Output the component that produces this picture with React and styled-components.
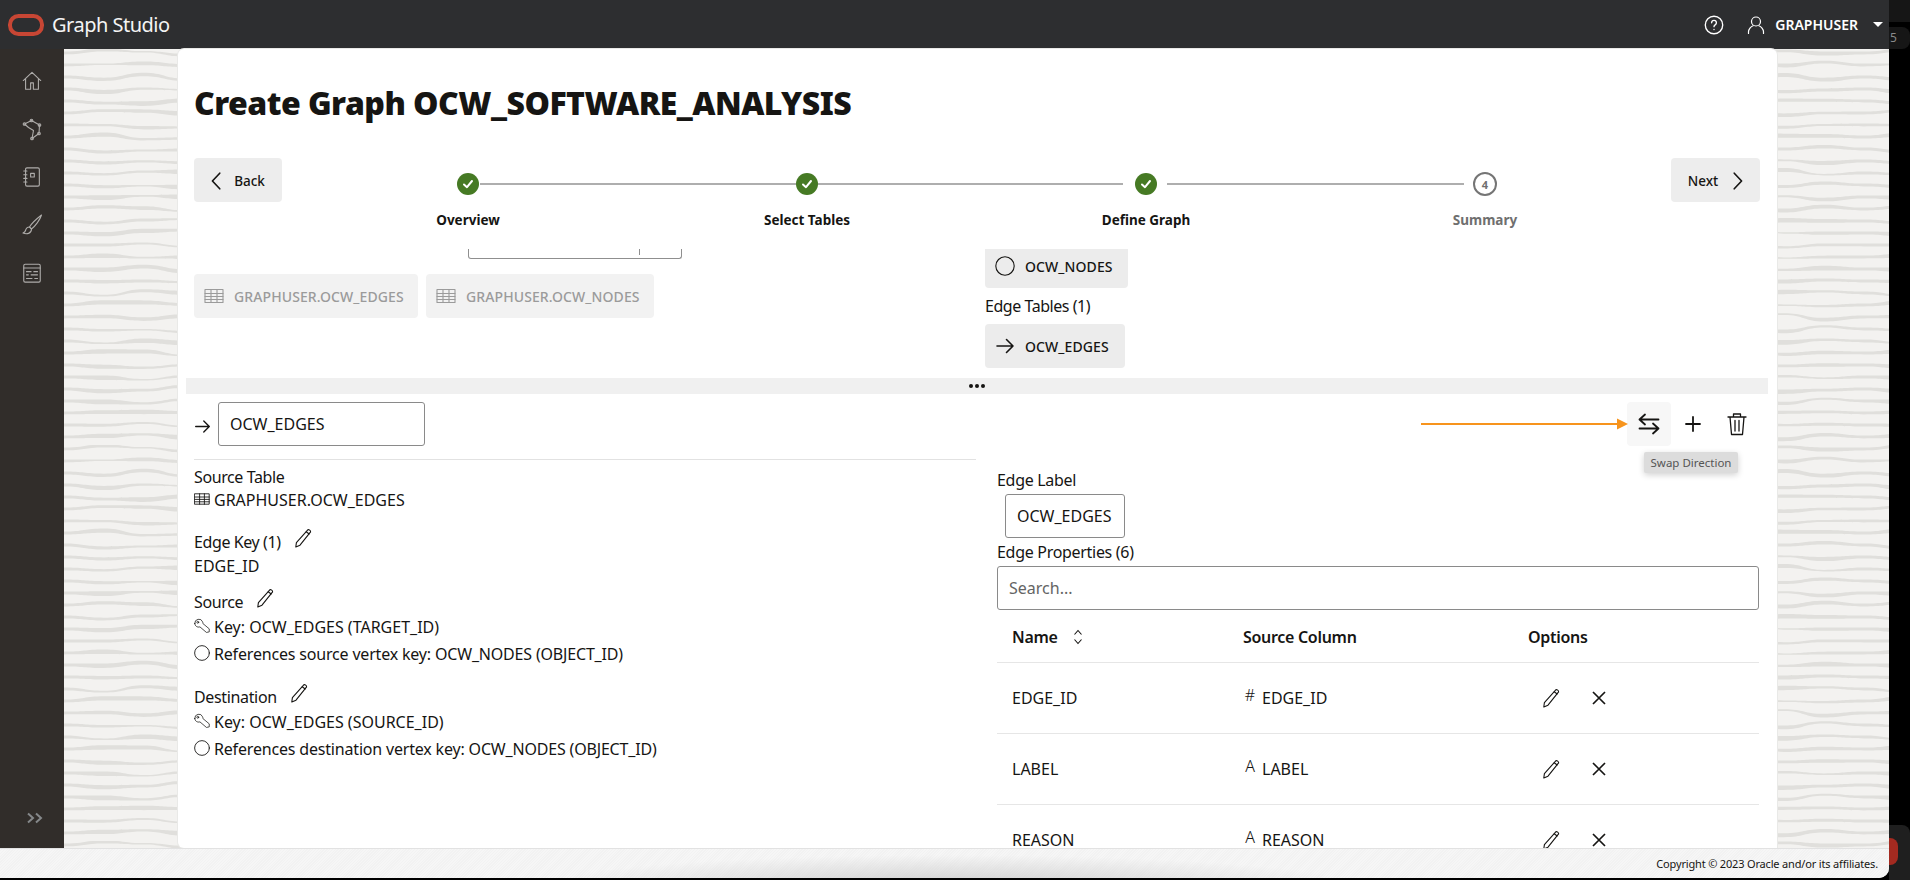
import React from 'react'
import styled, { createGlobalStyle } from 'styled-components'

// wavy stripes of the page background, built once as an svg tile
const buildZebra = () => {
  let seed = 11
  const rnd = () => {
    seed = (seed * 16807) % 2147483647
    return seed / 2147483647
  }
  const w = 360
  const h = 396
  const curve = pts => {
    let d = ''
    for (let i = 1; i < pts.length; i++) {
      const [x0, y0] = pts[i - 1]
      const [x1, y1] = pts[i]
      const mid = (x0 + x1) / 2
      d += ` C${mid.toFixed(1)} ${y0.toFixed(1)} ${mid.toFixed(1)} ${y1.toFixed(1)} ${x1.toFixed(1)} ${y1.toFixed(1)}`
    }
    return d
  }
  let paths = ''
  for (let y = 4; y < h; y += 12) {
    const mid = []
    for (let x = 0; x <= w; x += 40) {
      const edge = x === 0 || x === w
      mid.push([x, edge ? y : y + (rnd() - 0.5) * 6, edge ? 1.4 : 0.7 + rnd() * 1.7])
    }
    const top = mid.map(([x, my, t]) => [x, my - t])
    const bottom = mid.map(([x, my, t]) => [x, my + t]).reverse()
    paths += `<path d='M0 ${top[0][1]}${curve(top)} L${w} ${bottom[0][1]}${curve(bottom)} Z'/>`
  }
  const svg = `<svg xmlns='http://www.w3.org/2000/svg' width='${w}' height='${h}' fill='#e0dfdc'>${paths}</svg>`
  return `url("data:image/svg+xml,${encodeURIComponent(svg)}")`
}
const zebra = buildZebra()

const GlobalStyle = createGlobalStyle`
  html, body { margin: 0; padding: 0; background: #000; }
  body { font-family: "Noto Sans", "Open Sans", sans-serif; color: #161513; }
  * { box-sizing: border-box; }
`

const Screen = styled.div`
  width: 1910px;
  height: 880px;
  display: flex;
  overflow: hidden;
  background: #000;
`
const AppWindow = styled.div`
  width: 1889px;
  height: 878px;
  display: flex;
  flex-direction: column;
  border-bottom-right-radius: 10px;
  overflow: hidden;
  background: #f5f5f5;
`
const Edge = styled.div`
  flex: 1;
  display: flex;
  flex-direction: column;
`
const EdgeTop = styled.div`
  height: 22px;
  background: #161616;
`
const EdgeBadge = styled.div`
  height: 22px;
  margin: 5px 0 0;
  padding-left: 1px;
  border-radius: 0 8px 8px 0;
  background: #161616;
  color: #8a8a8a;
  font-size: 12px;
  line-height: 22px;
`
const EdgeBottom = styled.div`
  margin-top: auto;
  height: 55px;
  border-top-right-radius: 8px;
  background: #1f1f1f;
  padding-top: 13px;
`
const EdgeRed = styled.div`
  width: 9px;
  height: 27px;
  border-radius: 0 8px 8px 0;
  background: #a32a20;
`

const Header = styled.header`
  height: 49px;
  flex: none;
  display: flex;
  align-items: center;
  padding: 0 0 0 8px;
  background: #2d2e30;
  color: #fff;
`
const Brand = styled.div`
  margin-left: 8px;
  font-size: 20px;
  letter-spacing: -0.5px;
  color: #f4f4f4;
`
const HeaderRight = styled.div`
  margin-left: auto;
  display: flex;
  align-items: center;
  gap: 21px;
`
const UserBlock = styled.div`
  display: flex;
  align-items: center;
`
const UserName = styled.span`
  margin-left: 9px;
  font-size: 14px;
  font-weight: 600;
`
const Caret = styled.span`
  margin: 0 6px 0 15px;
  width: 0;
  height: 0;
  border-left: 5px solid transparent;
  border-right: 5px solid transparent;
  border-top: 5px solid #fff;
`

const Body = styled.div`
  flex: 1;
  min-height: 0;
  display: flex;
`
const Sidebar = styled.nav`
  width: 64px;
  flex: none;
  display: flex;
  flex-direction: column;
  align-items: center;
  gap: 24px;
  padding-top: 20px;
  background: #312d2a;
  color: #aeacaa;
`
const SideItem = styled.div`
  width: 24px;
  height: 24px;
  display: flex;
  align-items: center;
  justify-content: center;
`
const Collapse = styled.div`
  margin-top: auto;
  margin-left: 6px;
  margin-bottom: 20px;
  color: #85888a;
  height: 20px;
`
const Main = styled.main`
  flex: 1;
  min-width: 0;
  padding-left: 114px;
  background-color: #f3f2f0;
  background-image: ${zebra};
`
const Panel = styled.section`
  width: 1599px;
  height: 100%;
  padding: 32px 17px 0 16px;
  overflow: hidden;
  background: #fff;
  border-radius: 6px 6px 0 6px;
  box-shadow: 0 0 0 1px #e9e9e7;
`
const Title = styled.h1`
  margin: 0 0 33px;
  font-size: 32px;
  line-height: 44px;
  font-weight: 900;
  letter-spacing: -0.53px;
`
const Wizard = styled.div`
  display: flex;
  align-items: flex-start;
  height: 91px;
`
const NavButton = styled.button`
  flex: none;
  width: ${p => p.$w}px;
  height: 44px;
  display: flex;
  align-items: center;
  justify-content: center;
  gap: ${p => p.$gap}px;
  padding: 1px ${p => p.$right || 0}px 0 ${p => p.$left || 0}px;
  border: 0;
  border-radius: 4px;
  background: #ededed;
  color: #161513;
  font: 500 13.5px "Noto Sans", sans-serif;
`
const Stepper = styled.div`
  flex: 1;
  margin: 0 16.5px;
  display: grid;
  grid-template-columns: repeat(4, 339px);
`
const Step = styled.div`
  display: flex;
  flex-direction: column;
  align-items: center;
  padding-top: 15px;
`
const Track = styled.div`
  width: 100%;
  height: 22px;
  display: flex;
  align-items: center;
`
const TrackLine = styled.span`
  flex: none;
  width: calc(50% - 11px - ${p => p.$gap}px);
  height: 2px;
  margin: ${p => (p.$side === 'left' ? `0 ${p.$gap}px 0 0` : `0 0 0 ${p.$gap}px`)};
  background: ${p => (p.$off ? 'transparent' : '#aeaeae')};
`
const DoneDot = styled.span`
  width: 22px;
  height: 22px;
  flex: none;
  display: flex;
  align-items: center;
  justify-content: center;
  border-radius: 50%;
  background: #467a24;
`
const TodoDot = styled.span`
  width: 24px;
  height: 24px;
  flex: none;
  margin: 0 -1px;
  display: flex;
  align-items: center;
  justify-content: center;
  border-radius: 50%;
  border: 2px solid #757575;
  color: #6f6f6f;
  font-size: 11px;
  font-weight: 700;
`
const StepLabel = styled.div`
  margin-top: 15px;
  line-height: 20px;
  font-size: 13.5px;
  font-weight: 700;
  color: ${p => (p.$muted ? '#6f6f6f' : '#161513')};
`

const UpperPane = styled.div`
  height: 129px;
  overflow: hidden;
  display: grid;
  grid-template-columns: 791px 1fr;
`
const Bracket = styled.div`
  position: relative;
  width: 214px;
  height: 10px;
  margin-left: 274px;
  border: 1px solid #8f8f8f;
  border-top: 0;
  border-radius: 0 0 3px 3px;
  &::after {
    content: '';
    position: absolute;
    left: 170px;
    top: 0;
    height: 6px;
    width: 1px;
    background: #8f8f8f;
  }
`
const TableChips = styled.div`
  margin-top: 15px;
  display: flex;
  gap: 8px;
`
const Chip = styled.div`
  height: 44px;
  width: ${p => p.$w}px;
  margin-top: ${p => p.$top || 0}px;
  display: flex;
  align-items: center;
  gap: 10px;
  padding-left: 10px;
  border-radius: 4px;
  background: ${p => (p.$muted ? '#f2f2f2' : '#ececec')};
  color: ${p => (p.$muted ? '#9b9b9b' : '#161513')};
  font-size: 14px;
  font-weight: 500;
  letter-spacing: 0.1px;
`
const GroupLabel = styled.div`
  margin: 7px 0 7px;
  line-height: 22px;
  font-size: 16px;
  letter-spacing: -0.45px;
`
const Splitter = styled.div`
  height: 16px;
  margin: 0 -8px;
  display: flex;
  align-items: center;
  justify-content: center;
  gap: 2px;
  background: #f0f0f0;
`
const SplitDot = styled.span`
  width: 4px;
  height: 4px;
  border-radius: 50%;
  background: #161513;
`
const LowerPane = styled.div`
  height: 454px;
  overflow: hidden;
  display: grid;
  grid-template-columns: 782px 762px;
  column-gap: 21px;
  padding-top: 8px;
`
const NameRow = styled.div`
  display: flex;
  align-items: center;
  gap: 7px;
  height: 44px;
`
const NameArrow = styled.span`
  display: flex;
  margin-top: 5px;
`
const TextField = styled.div`
  width: ${p => p.$w}px;
  height: 44px;
  display: flex;
  align-items: center;
  padding-left: 11px;
  border: 1px solid #8a8a8a;
  border-radius: 3px;
  font-size: 16px;
  color: ${p => (p.$placeholder ? '#646464' : '#161513')};
`
const Rule = styled.div`
  height: 1px;
  margin: 13px 0 6px;
  background: #e2e2e2;
`
const Detail = styled.div`
  margin-top: ${p => p.$top || 0}px;
  display: flex;
  align-items: center;
  gap: 4px;
  min-height: 22px;
  line-height: 22px;
  font-size: 16px;
  letter-spacing: ${p => p.$ls || 0}px;
`
const DetailIcon = styled.span`
  width: 16px;
  height: 16px;
  flex: none;
  display: flex;
  margin-top: -3px;
`
const EditIcon = styled.span`
  margin-left: 8px;
  margin-top: -9px;
  display: flex;
`
const Actions = styled.div`
  display: flex;
  justify-content: flex-end;
  height: 44px;
`
const ActionButton = styled.div`
  position: relative;
  width: 44px;
  height: 44px;
  display: flex;
  align-items: center;
  justify-content: center;
  border-radius: 4px;
  background: ${p => (p.$hover ? '#f7f7f7' : 'transparent')};
`
const Tooltip = styled.div`
  position: absolute;
  left: 17px;
  top: 50px;
  width: 94px;
  height: 21px;
  display: flex;
  align-items: center;
  justify-content: center;
  white-space: nowrap;
  border-radius: 2px;
  background: #dcdcdc;
  box-shadow: 0 2px 6px rgba(0, 0, 0, 0.18);
  color: #555;
  font-size: 11.5px;
`
const Callout = styled.svg`
  position: absolute;
  right: 42px;
  top: 15px;
`
const FieldLabel = styled.div`
  margin-top: ${p => p.$top}px;
  line-height: 22px;
  font-size: 16px;
  letter-spacing: -0.3px;
`
const LabelField = styled.div`
  margin: 3px 0 3px ${p => p.$left || 0}px;
`
const PropRow = styled.div`
  display: grid;
  grid-template-columns: 231px 285px 1fr;
  align-items: center;
  height: ${p => p.$h}px;
  padding-left: 15px;
  padding-bottom: ${p => (p.$head ? 2 : 0)}px;
  border-bottom: 1px solid #e6e6e6;
  font-size: 16px;
  font-weight: ${p => (p.$head ? 600 : 400)};
  letter-spacing: ${p => (p.$head ? '-0.3px' : '0')};
`
const NameCell = styled.div`
  display: flex;
  align-items: center;
  gap: 15px;
`
const SourceCell = styled.div`
  display: flex;
  align-items: center;
  gap: 5px;
`
const TypeGlyph = styled.span`
  width: 14px;
  margin-top: -7px;
  text-align: center;
  font-size: 16px;
  line-height: 16px;
  font-weight: 300;
`
const OptionsCell = styled.div`
  display: flex;
  align-items: center;
  gap: 31px;
  padding-left: 13px;
`
const Footer = styled.footer`
  height: 30px;
  flex: none;
  display: flex;
  align-items: center;
  justify-content: flex-end;
  padding-right: 11px;
  border-top: 1px solid #e2e2e2;
  background: radial-gradient(ellipse 400px 30px at 950px 36px, #d0d0d0, rgba(208, 208, 208, 0) 100%),
    repeating-linear-gradient(135deg, #f6f6f6 0 1px, #f2f2f2 1px 2px);
  font-size: 11px;
  letter-spacing: -0.17px;
  color: #161513;
`

const Svg = ({ size = 24, box = 24, sw = 1.5, children, ...rest }) => (
  <svg width={size} height={size} viewBox={`0 0 ${box} ${box}`} fill="none" stroke="currentColor" strokeWidth={sw} strokeLinecap="round" strokeLinejoin="round" {...rest}>
    {children}
  </svg>
)

const OracleLogo = () => (
  <svg width="36" height="22" viewBox="0 0 36 22" style={{ flex: 'none' }}>
    <rect x="2" y="2" width="32" height="18" rx="8.5" fill="none" stroke="#c74634" strokeWidth="4" />
  </svg>
)
const HelpIcon = () => (
  <Svg size={22}>
    <circle cx="12" cy="12" r="9.5" />
    <path d="M9.4 9.5a2.6 2.6 0 1 1 3.9 2.3c-.9.5-1.3 1-1.3 2" />
    <path d="M12 16.8v.2" />
  </Svg>
)
const UserIcon = () => (
  <Svg size={20} box={20} sw={1.2}>
    <circle cx="10" cy="6.5" r="4.5" />
    <path d="M2.5 18.5v-1.7c0-2.6 2.4-5.3 4.6-6M17.5 18.5v-1.7c0-2.6-2.4-5.3-4.6-6" />
  </Svg>
)
const HomeIcon = () => (
  <Svg size={22} sw={1.2}>
    <path d="M2.5 11.5 12 2.5l9.5 9M5 9.5V21h5.5v-7h3v7H19V9.5" />
  </Svg>
)
const GraphIcon = () => (
  <Svg size={24} sw={1.1}>
    <path d="M4.5 7 11.5 3.5 19.5 8 19 16.5 12 21.5 13.5 13.5 8.5 10.5 4.5 7Z" />
    <circle cx="4.5" cy="7" r="1.3" />
    <circle cx="11.5" cy="3.5" r="1.3" />
    <circle cx="19.5" cy="8" r="1.3" />
    <circle cx="19" cy="16.5" r="1.3" />
    <circle cx="12" cy="21.5" r="1.3" />
  </Svg>
)
const NotebookIcon = () => (
  <Svg size={22} sw={1.2}>
    <rect x="5" y="2" width="15" height="20" rx="1.5" />
    <rect x="10.5" y="8" width="4" height="4" />
    <path d="M3 5.5h3.5M3 9.5h3.5M3 13.5h3.5M3 17.5h3.5" />
  </Svg>
)
const BrushIcon = () => (
  <Svg size={24} sw={1.1}>
    <path d="M21.5 2C17 5.5 11.5 10.5 9.5 14l2 2c3.5-2.5 8.5-9 10-14Z" />
    <path d="M9.5 14c-2.5 0-3.5 1.5-4 3.5-.3 1.2-1.2 2-2.5 2.5 3.5 1.5 8.5.8 8.5-4" />
  </Svg>
)
const ReportIcon = () => (
  <Svg size={22} sw={1.2}>
    <rect x="3" y="2.5" width="18" height="19.5" rx="1.5" />
    <path d="M3 6.5h18M6 10.5h5M14 10.5h4M6 14h2M11 14h7M6 18h6M15 18h3" />
  </Svg>
)
const Chevrons = () => (
  <svg width="20" height="20" viewBox="0 0 20 20" fill="none" stroke="currentColor" strokeWidth="2">
    <path d="M3 5.5l5 4.5-5 4.5M11 5.5l5 4.5-5 4.5" />
  </svg>
)
const CheckMark = () => (
  <svg width="12" height="12" viewBox="0 0 12 12" fill="none" stroke="#fff" strokeWidth="2" strokeLinecap="round" strokeLinejoin="round">
    <path d="M2 6.5 5 9.2 10 3" />
  </svg>
)
const ChevronLeft = () => (
  <Svg size={22} sw={1.8}><path d="M15 3.5 7 12l8 8.5" /></Svg>
)
const ChevronRight = () => (
  <Svg size={22} sw={1.8}><path d="M9 3.5l8 8.5-8 8.5" /></Svg>
)
const TableIcon = ({ size = 20 }) => (
  <Svg size={size} box={20} sw={1.1}>
    <rect x="1" y="3.5" width="18" height="13" />
    <path d="M1 7.5h18M1 10.5h18M1 13.5h18M7 3.5v13M13 3.5v13" />
  </Svg>
)
const RingIcon = ({ size = 20 }) => (
  <Svg size={size} box={20} sw={1.1}><circle cx="10" cy="10" r="9.2" /></Svg>
)
const ArrowRight = ({ size = 20 }) => (
  <Svg size={size} box={20} sw={1.6}><path d="M2 10h16M11.5 3.5 18 10l-6.5 6.5" /></Svg>
)
const PencilIcon = ({ size = 20 }) => (
  <Svg size={size} box={20} sw={1.1}>
    <path d="M14.8 1.8c1-.6 3 .7 2.8 2L7 17.2 2.8 19l.6-4.4L14.8 1.8Z" />
    <path d="M13.2 3.8l3 2.2" />
  </Svg>
)
const KeyIcon = () => (
  <Svg size={17} box={17} sw={0.8}>
    <path d="M.8 5.2a4.3 4.3 0 0 1 8.3-1.7c.3.6.4 1.2.3 1.8l6.8 5.7v3.2l-3 .6-6.9-5.9C3.6 9.8.8 8 .8 5.2Z" />
    <circle cx="4" cy="4" r="1" />
  </Svg>
)
const SwapIcon = () => (
  <Svg size={24} sw={1.8}>
    <path d="M2.5 7.5h19M8 2.5l-5.5 5 5.5 5" />
    <path d="M2.5 16.5h19M16 11.5l5.5 5-5.5 5" />
  </Svg>
)
const PlusIcon = () => (
  <Svg size={18} box={18} sw={1.8}><path d="M9 2v14M2 9h14" /></Svg>
)
const TrashIcon = () => (
  <Svg size={24} sw={1.3}>
    <path d="M3 5h18M8.5 5V2h7v3M5 5l1.5 17.5h11L19 5M10 8.5V19M14 8.5V19" />
  </Svg>
)
const SortIcon = () => (
  <svg width="10" height="16" viewBox="0 0 10 16" fill="none" stroke="currentColor" strokeWidth="1.1">
    <path d="M1.5 5.5 5 1.5l3.5 4M1.5 10.5l3.5 4 3.5-4" />
  </svg>
)
const CloseIcon = () => (
  <Svg size={14} box={14} sw={1.7} strokeLinecap="butt"><path d="M1 1l12 12M13 1 1 13" /></Svg>
)

const steps = [
  { label: 'Overview', done: true, right: 1 },
  { label: 'Select Tables', done: true },
  { label: 'Define Graph', done: true, left: 12, right: 10 },
  { label: 'Summary', done: false, left: 10 }
]

const properties = [
  { name: 'EDGE_ID', glyph: '#' },
  { name: 'LABEL', glyph: 'A' },
  { name: 'REASON', glyph: 'A' }
]

export default function App() {
  return (
    <Screen>
      <GlobalStyle />
      <AppWindow>
        <Header>
          <OracleLogo />
          <Brand>Graph Studio</Brand>
          <HeaderRight>
            <HelpIcon />
            <UserBlock>
              <UserIcon />
              <UserName>GRAPHUSER</UserName>
              <Caret />
            </UserBlock>
          </HeaderRight>
        </Header>
        <Body>
          <Sidebar>
            <SideItem><HomeIcon /></SideItem>
            <SideItem><GraphIcon /></SideItem>
            <SideItem><NotebookIcon /></SideItem>
            <SideItem><BrushIcon /></SideItem>
            <SideItem><ReportIcon /></SideItem>
            <Collapse><Chevrons /></Collapse>
          </Sidebar>
          <Main>
            <Panel>
              <Title>Create Graph OCW_SOFTWARE_ANALYSIS</Title>
              <Wizard>
                <NavButton $w={88} $gap={6} $right={5}><ChevronLeft />Back</NavButton>
                <Stepper>
                  {steps.map((s, i) => (
                    <Step key={s.label}>
                      <Track>
                        <TrackLine $side="left" $off={i === 0} $gap={s.left || 0} />
                        {s.done ? <DoneDot><CheckMark /></DoneDot> : <TodoDot>{i + 1}</TodoDot>}
                        <TrackLine $side="right" $off={i === 3} $gap={s.right || 0} />
                      </Track>
                      <StepLabel $muted={!s.done}>{s.label}</StepLabel>
                    </Step>
                  ))}
                </Stepper>
                <NavButton $w={89} $gap={8} $left={5}>Next<ChevronRight /></NavButton>
              </Wizard>

              <UpperPane>
                <div>
                  <Bracket />
                  <TableChips>
                    <Chip $muted $w={224}><TableIcon />GRAPHUSER.OCW_EDGES</Chip>
                    <Chip $muted $w={228}><TableIcon />GRAPHUSER.OCW_NODES</Chip>
                  </TableChips>
                </div>
                <div>
                  <Chip $top={-5} $w={143}><RingIcon />OCW_NODES</Chip>
                  <GroupLabel>Edge Tables (1)</GroupLabel>
                  <Chip $w={140}><ArrowRight />OCW_EDGES</Chip>
                </div>
              </UpperPane>

              <Splitter><SplitDot /><SplitDot /><SplitDot /></Splitter>

              <LowerPane>
                <div>
                  <NameRow>
                    <NameArrow><ArrowRight size={17} /></NameArrow>
                    <TextField $w={207}>OCW_EDGES</TextField>
                  </NameRow>
                  <Rule />
                  <Detail $ls={-0.4}>Source Table</Detail>
                  <Detail $top={1}><DetailIcon><TableIcon size={16} /></DetailIcon>GRAPHUSER.OCW_EDGES</Detail>
                  <Detail $top={20} $ls={-0.4}>Edge Key (1)<EditIcon><PencilIcon /></EditIcon></Detail>
                  <Detail $top={2}>EDGE_ID</Detail>
                  <Detail $top={14} $ls={-0.35}>Source<EditIcon><PencilIcon /></EditIcon></Detail>
                  <Detail $top={3}><DetailIcon><KeyIcon /></DetailIcon>Key: OCW_EDGES (TARGET_ID)</Detail>
                  <Detail $top={5} $ls={-0.18}><DetailIcon><RingIcon size={16} /></DetailIcon>References source vertex key: OCW_NODES (OBJECT_ID)</Detail>
                  <Detail $top={21} $ls={-0.35}>Destination<EditIcon><PencilIcon /></EditIcon></Detail>
                  <Detail $top={3}><DetailIcon><KeyIcon /></DetailIcon>Key: OCW_EDGES (SOURCE_ID)</Detail>
                  <Detail $top={5} $ls={-0.18}><DetailIcon><RingIcon size={16} /></DetailIcon>References destination vertex key: OCW_NODES (OBJECT_ID)</Detail>
                </div>
                <div>
                  <Actions>
                    <ActionButton $hover>
                      <Callout width="208" height="14" viewBox="0 0 208 14">
                        <path d="M0 7h196" stroke="#f7941d" strokeWidth="2" />
                        <path d="M196 1.5 207 7l-11 5.5Z" fill="#f7941d" />
                      </Callout>
                      <SwapIcon />
                      <Tooltip>Swap Direction</Tooltip>
                    </ActionButton>
                    <ActionButton><PlusIcon /></ActionButton>
                    <ActionButton><TrashIcon /></ActionButton>
                  </Actions>
                  <FieldLabel $top={23}>Edge Label</FieldLabel>
                  <LabelField $left={8}><TextField $w={120}>OCW_EDGES</TextField></LabelField>
                  <FieldLabel $top={0}>Edge Properties (6)</FieldLabel>
                  <LabelField><TextField $placeholder $w={762}>Search...</TextField></LabelField>
                  <PropRow $head $h={50}>
                    <NameCell>Name<SortIcon /></NameCell>
                    <div>Source Column</div>
                    <div>Options</div>
                  </PropRow>
                  {properties.map(p => (
                    <PropRow key={p.name} $h={71}>
                      <div>{p.name}</div>
                      <SourceCell><TypeGlyph>{p.glyph}</TypeGlyph>{p.name}</SourceCell>
                      <OptionsCell><PencilIcon /><CloseIcon /></OptionsCell>
                    </PropRow>
                  ))}
                </div>
              </LowerPane>
            </Panel>
          </Main>
        </Body>
        <Footer>Copyright © 2023 Oracle and/or its affiliates.</Footer>
      </AppWindow>
      <Edge>
        <EdgeTop />
        <EdgeBadge>5</EdgeBadge>
        <EdgeBottom><EdgeRed /></EdgeBottom>
      </Edge>
    </Screen>
  )
}
